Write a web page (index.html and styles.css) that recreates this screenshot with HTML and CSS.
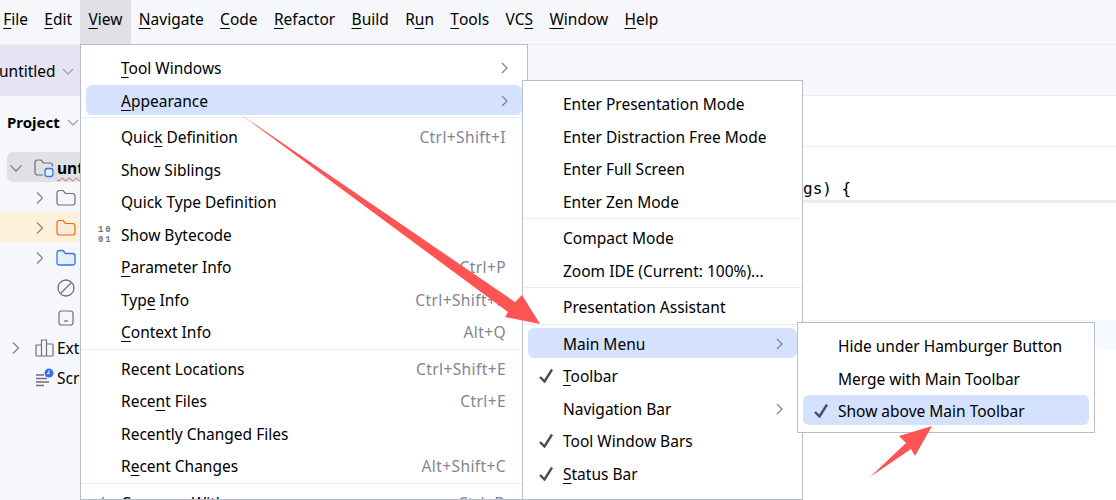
FILE: index.html
```html
<!DOCTYPE html>
<html>
<head>
	<meta charset="utf-8">
	<title>IDE View menu</title>
	<link rel="stylesheet" href="styles.css">
</head>
<body>
	<div class="menubar">
		<div class="top-item"><u>F</u>ile</div>
		<div class="top-item"><u>E</u>dit</div>
		<div class="top-item open"><u>V</u>iew</div>
		<div class="top-item"><u>N</u>avigate</div>
		<div class="top-item"><u>C</u>ode</div>
		<div class="top-item"><u>R</u>efactor</div>
		<div class="top-item"><u>B</u>uild</div>
		<div class="top-item">R<u>u</u>n</div>
		<div class="top-item"><u>T</u>ools</div>
		<div class="top-item">VC<u>S</u></div>
		<div class="top-item"><u>W</u>indow</div>
		<div class="top-item"><u>H</u>elp</div>
	</div>
	<div class="toolbar">
		<div class="project-switch">untitled
			<svg class="chev" width="14" height="14" viewBox="0 0 14 14"><path d="M2 5l5 5 5-5"/></svg>
		</div>
	</div>
	<div class="workspace">
		<div class="sidebar">
			<div class="side-title">Project
				<svg class="chev" width="14" height="14" viewBox="0 0 14 14"><path d="M2 5l5 5 5-5"/></svg>
			</div>
			<div class="tree">
				<div class="tree-row root">
					<svg class="arrow" width="14" height="14" viewBox="0 0 14 14"><path d="M1.500 4.500L7 10l5.500-5.500"/></svg>
					<svg class="icon" width="20" height="20" viewBox="0 0 20 20"><path class="gray" d="M9 17H3.500A2.500 2.500 0 0 1 1 14.500v-10A2.500 2.500 0 0 1 3.500 2h3.500l2.500 3H16a2.500 2.500 0 0 1 2.500 2.500v1"/><rect class="blue" x="11" y="10.500" width="8" height="8" rx="2.500"/></svg>
					<span class="root-name">unt</span>
				</div>
				<div class="tree-row sub">
					<svg class="arrow" width="14" height="14" viewBox="0 0 14 14"><path d="M4 1.500L9.500 7 4 12.500"/></svg>
					<svg class="icon" width="20" height="20" viewBox="0 0 20 20"><path class="gray" d="M3.500 2.500H7l2.500 3h7a2.500 2.500 0 0 1 2.500 2.500v6.500a2.500 2.500 0 0 1-2.500 2.500h-13A2.500 2.500 0 0 1 1 14.500V5a2.500 2.500 0 0 1 2.500-2.500z"/></svg>
				</div>
				<div class="tree-row sub excluded">
					<svg class="arrow" width="14" height="14" viewBox="0 0 14 14"><path d="M4 1.500L9.500 7 4 12.500"/></svg>
					<svg class="icon" width="20" height="20" viewBox="0 0 20 20"><path class="orange" d="M3.500 2.500H7l2.500 3h7a2.500 2.500 0 0 1 2.500 2.500v6.500a2.500 2.500 0 0 1-2.500 2.500h-13A2.500 2.500 0 0 1 1 14.500V5a2.500 2.500 0 0 1 2.500-2.500z"/></svg>
				</div>
				<div class="tree-row sub">
					<svg class="arrow" width="14" height="14" viewBox="0 0 14 14"><path d="M4 1.500L9.500 7 4 12.500"/></svg>
					<svg class="icon" width="20" height="20" viewBox="0 0 20 20"><path class="blue" d="M3.500 2.500H7l2.500 3h7a2.500 2.500 0 0 1 2.500 2.500v6.500a2.500 2.500 0 0 1-2.500 2.500h-13A2.500 2.500 0 0 1 1 14.500V5a2.500 2.500 0 0 1 2.500-2.500z"/></svg>
				</div>
				<div class="tree-row sub">
					<span class="arrow-gap"></span>
					<svg class="icon" width="20" height="20" viewBox="0 0 20 20"><circle class="gray-plain" cx="10" cy="10" r="8"/><path class="gray-plain" d="M4.500 15.500l11-11"/></svg>
				</div>
				<div class="tree-row sub">
					<span class="arrow-gap"></span>
					<svg class="icon" width="20" height="20" viewBox="0 0 20 20"><rect class="gray" x="3" y="3" width="14" height="14" rx="2.500"/><path class="gray-plain" d="M8 13h4"/></svg>
				</div>
				<div class="tree-row">
					<svg class="arrow" width="14" height="14" viewBox="0 0 14 14"><path d="M4 1.500L9.500 7 4 12.500"/></svg>
					<svg class="icon" width="20" height="20" viewBox="0 0 20 20"><path class="gray" d="M2 7h5.500v11H3a1 1 0 0 1-1-1zM7.500 2h5v16h-5zM12.500 6H18a1 1 0 0 1 1 1v10a1 1 0 0 1-1 1h-5.500z"/></svg>
					<span>Exte</span>
				</div>
				<div class="tree-row">
					<span class="arrow-gap"></span>
					<svg class="icon" width="20" height="20" viewBox="0 0 20 20"><path class="gray-plain" d="M2 7h8M2 10.500h11M2 14h13M2 17.500h8"/><circle cx="15" cy="5" r="4.500" fill="#3574f0"/><path d="M15 2.500V5.500h-2" fill="none" stroke="#fff" stroke-width="1"/></svg>
					<span>Scr</span>
				</div>
			</div>
		</div>
		<div class="editor">
			<div class="editor-tabs"></div>
			<div class="code-line">gs) {</div>
			<div class="caret-row"></div>
		</div>
	</div>

	<div class="menu view-menu">
		<div class="row"><span class="label"><u>T</u>ool Windows</span><svg class="sub-arrow" width="10" height="12" viewBox="0 0 10 12"><path d="M2 1l5 5-5 5"/></svg></div>
		<div class="row active"><span class="label"><u>A</u>ppearance</span><svg class="sub-arrow" width="10" height="12" viewBox="0 0 10 12"><path d="M2 1l5 5-5 5"/></svg></div>
		<div class="sep"></div>
		<div class="row"><span class="label">Quic<u>k</u> Definition</span><span class="keys">Ctrl+Shift+I</span></div>
		<div class="row"><span class="label">Show Siblings</span></div>
		<div class="row"><span class="label">Quick Type Definition</span></div>
		<div class="row"><span class="byte">10<br>01</span><span class="label">Show Bytecode</span></div>
		<div class="row"><span class="label"><u>P</u>arameter Info</span><span class="keys">Ctrl+P</span></div>
		<div class="row"><span class="label">Typ<u>e</u> Info</span><span class="keys">Ctrl+Shift+P</span></div>
		<div class="row"><span class="label"><u>C</u>ontext Info</span><span class="keys">Alt+Q</span></div>
		<div class="sep"></div>
		<div class="row"><span class="label">Recent Locations</span><span class="keys">Ctrl+Shift+E</span></div>
		<div class="row"><span class="label">Rece<u>n</u>t Files</span><span class="keys">Ctrl+E</span></div>
		<div class="row"><span class="label">Recently Changed Files</span></div>
		<div class="row"><span class="label">R<u>e</u>cent Changes</span><span class="keys">Alt+Shift+C</span></div>
		<div class="sep"></div>
		<div class="row"><svg class="back" width="20" height="14" viewBox="0 0 20 14"><path d="M8 2L3 7l5 5M3 7h14"/></svg><span class="label">Compare With...</span><span class="keys">Ctrl+D</span></div>
	</div>

	<div class="menu appearance-menu">
		<div class="row"><span class="label">Enter Presentation Mode</span></div>
		<div class="row"><span class="label">Enter Distraction Free Mode</span></div>
		<div class="row"><span class="label">Enter Full Screen</span></div>
		<div class="row"><span class="label">Enter Zen Mode</span></div>
		<div class="sep"></div>
		<div class="row"><span class="label">Compact Mode</span></div>
		<div class="row"><span class="label">Zoom IDE (Current: 100%)...</span></div>
		<div class="sep"></div>
		<div class="row"><span class="label">Presentation Assistant</span></div>
		<div class="sep"></div>
		<div class="row active"><span class="label">Main Menu</span><svg class="sub-arrow" width="10" height="12" viewBox="0 0 10 12"><path d="M2 1l5 5-5 5"/></svg></div>
		<div class="row"><svg class="check" width="16" height="14" viewBox="0 0 16 14"><path d="M2 8l4.500 4.500L14 .5"/></svg><span class="label"><u>T</u>oolbar</span></div>
		<div class="row"><span class="label">Navigation Bar</span><svg class="sub-arrow" width="10" height="12" viewBox="0 0 10 12"><path d="M2 1l5 5-5 5"/></svg></div>
		<div class="row"><svg class="check" width="16" height="14" viewBox="0 0 16 14"><path d="M2 8l4.500 4.500L14 .5"/></svg><span class="label">Tool Window Bars</span></div>
		<div class="row"><svg class="check" width="16" height="14" viewBox="0 0 16 14"><path d="M2 8l4.500 4.500L14 .5"/></svg><span class="label"><u>S</u>tatus Bar</span></div>
		<div class="row"><span class="label">Status Bar Widgets</span></div>
	</div>

	<div class="menu toolbar-menu">
		<div class="row"><span class="label">Hide under Hamburger Button</span></div>
		<div class="row"><span class="label">Merge with Main Toolbar</span></div>
		<div class="row active"><svg class="check" width="16" height="14" viewBox="0 0 16 14"><path d="M2 8l4.500 4.500L14 .5"/></svg><span class="label">Show above Main Toolbar</span></div>
	</div>

	<svg class="arrows" width="1116" height="500" viewBox="0 0 1116 500">
		<path d="M240 114L515 302 522 295 540 324 505 317 508 312z"/>
		<path d="M870 477L906 443 899 436 932 426 915 456 911 449z"/>
	</svg>
</body>
</html>
```

FILE: styles.css
```css
* {
	box-sizing: border-box;
}
html, body {
	height: 500px;
	overflow: hidden;
}
body {
	margin: 0;
	position: relative;
	background-color: #fff;
	color: #000;
	font-family: "Noto Sans", sans-serif;
	font-size: 15.5px;
}
u {
	text-underline-offset: 3px;
}
.menubar {
	display: flex;
	height: 44px;
	margin-left: -5px;
	background-color: #f6f7fa;
}
.top-item {
	display: flex;
	align-items: center;
	height: 44px;
	padding: 0 8.200px 6px;
}
.top-item.open {
	background-color: #dfe1e5;
}
.toolbar {
	height: 52px;
	background-color: #f6f7fa;
	border-top: 1px solid #ebecf0;
	border-bottom: 1px solid #ebecf0;
}
.project-switch {
	display: flex;
	align-items: center;
	gap: 5px;
	width: 80px;
	height: 51px;
	background: #e6e3f3;
	text-indent: -1px;
}
.chev, .arrow, .sub-arrow, .back {
	fill: none;
	stroke: #a0a4b0;
	stroke-width: 1.3;
}
.arrow, .sub-arrow, .back {
	stroke: #818594;
}
.workspace {
	display: flex;
	height: 404px;
}
.sidebar {
	width: 80px;
	flex-shrink: 0;
	overflow: hidden;
	background-color: #f6f7fa;
}
.side-title {
	display: flex;
	align-items: center;
	gap: 6px;
	height: 52px;
	padding-left: 7px;
	font-size: 15px;
	font-weight: 700;
	white-space: nowrap;
}
.tree {
	display: flex;
	flex-direction: column;
	margin-top: 4px;
}
.tree-row {
	display: flex;
	align-items: center;
	height: 30px;
	padding-left: 9px;
	padding-top: 2px;
	white-space: nowrap;
}
.tree-row.root {
	margin-left: 7px;
	padding-left: 2px;
	border-radius: 6px 0 0 6px;
	background-color: #dfe1e5;
}
.tree-row.sub {
	padding-left: 33px;
}
.tree-row.excluded {
	background-color: #fdf1da;
}
.arrow, .arrow-gap {
	width: 14px;
	flex-shrink: 0;
	margin-right: 11px;
}
.tree-row.sub .arrow, .tree-row.sub .arrow-gap {
	margin-right: 9px;
}
.icon {
	flex-shrink: 0;
	margin-right: 3px;
}
.icon .gray {
	fill: none;
	stroke: #6c707e;
	stroke-width: 1.2;
}
.icon .gray-plain {
	fill: none;
	stroke: #6c707e;
	stroke-width: 1.3;
}
.icon .orange {
	fill: #fdeadb;
	stroke: #e66d17;
	stroke-width: 1.2;
}
.icon .blue {
	fill: #e7effd;
	stroke: #3574f0;
	stroke-width: 1.3;
}
.root-name {
	font-weight: 700;
	text-decoration: underline wavy #e55765 1px;
	text-underline-offset: 3px;
}
.editor {
	flex: 1;
	background-color: #fff;
}
.editor-tabs {
	height: 51px;
	border-bottom: 1px solid #ebecf0;
}
.code-line {
	display: flex;
	align-items: flex-end;
	height: 56px;
	padding: 0 0 2px 723px;
	font-family: "DejaVu Sans Mono", monospace;
	font-size: 16px;
	border-bottom: 3px solid #ebecf0;
}
.caret-row {
	height: 29px;
	margin-top: 117px;
	background-color: #f5f8fe;
}
.menu {
	position: absolute;
	background-color: #fff;
	border: 1px solid #b9bdc9;
	overflow: hidden;
}
.view-menu {
	left: 80px;
	top: 44px;
	bottom: 0;
	width: 448px;
	padding: 7px 5px 0;
}
.appearance-menu {
	left: 522px;
	top: 80px;
	bottom: 0;
	width: 281px;
	padding: 7px 5px 0;
}
.toolbar-menu {
	left: 797px;
	top: 322px;
	width: 298px;
	padding: 7px 5px 4.500px;
}
.row {
	position: relative;
	display: flex;
	align-items: center;
	justify-content: space-between;
	height: 30px;
	margin-bottom: 2.500px;
	padding: 2px 12px 0 35px;
	border-radius: 6px;
	white-space: nowrap;
}
.row.active {
	background-color: #d4e2ff;
}
.sep {
	height: 1px;
	margin: 0 -5px 3px;
	background-color: #ebecf0;
}
.keys {
	color: #818594;
	margin-right: 4px;
	letter-spacing: 0.4px;
}
.byte, .check, .back {
	position: absolute;
}
.byte {
	left: 12px;
	top: 6px;
	color: #6c707e;
	font-family: "Liberation Mono", monospace;
	font-size: 9px;
	font-weight: 700;
	line-height: 10px;
	letter-spacing: 1.8px;
}
.check {
	left: 10px;
	top: 9px;
	fill: none;
	stroke: #494b57;
	stroke-width: 2.4;
}
.back {
	left: 10px;
	top: 8px;
}
.arrows {
	position: absolute;
	left: 0;
	top: 0;
	pointer-events: none;
}
.arrows path {
	fill: #ff5454;
}
```
